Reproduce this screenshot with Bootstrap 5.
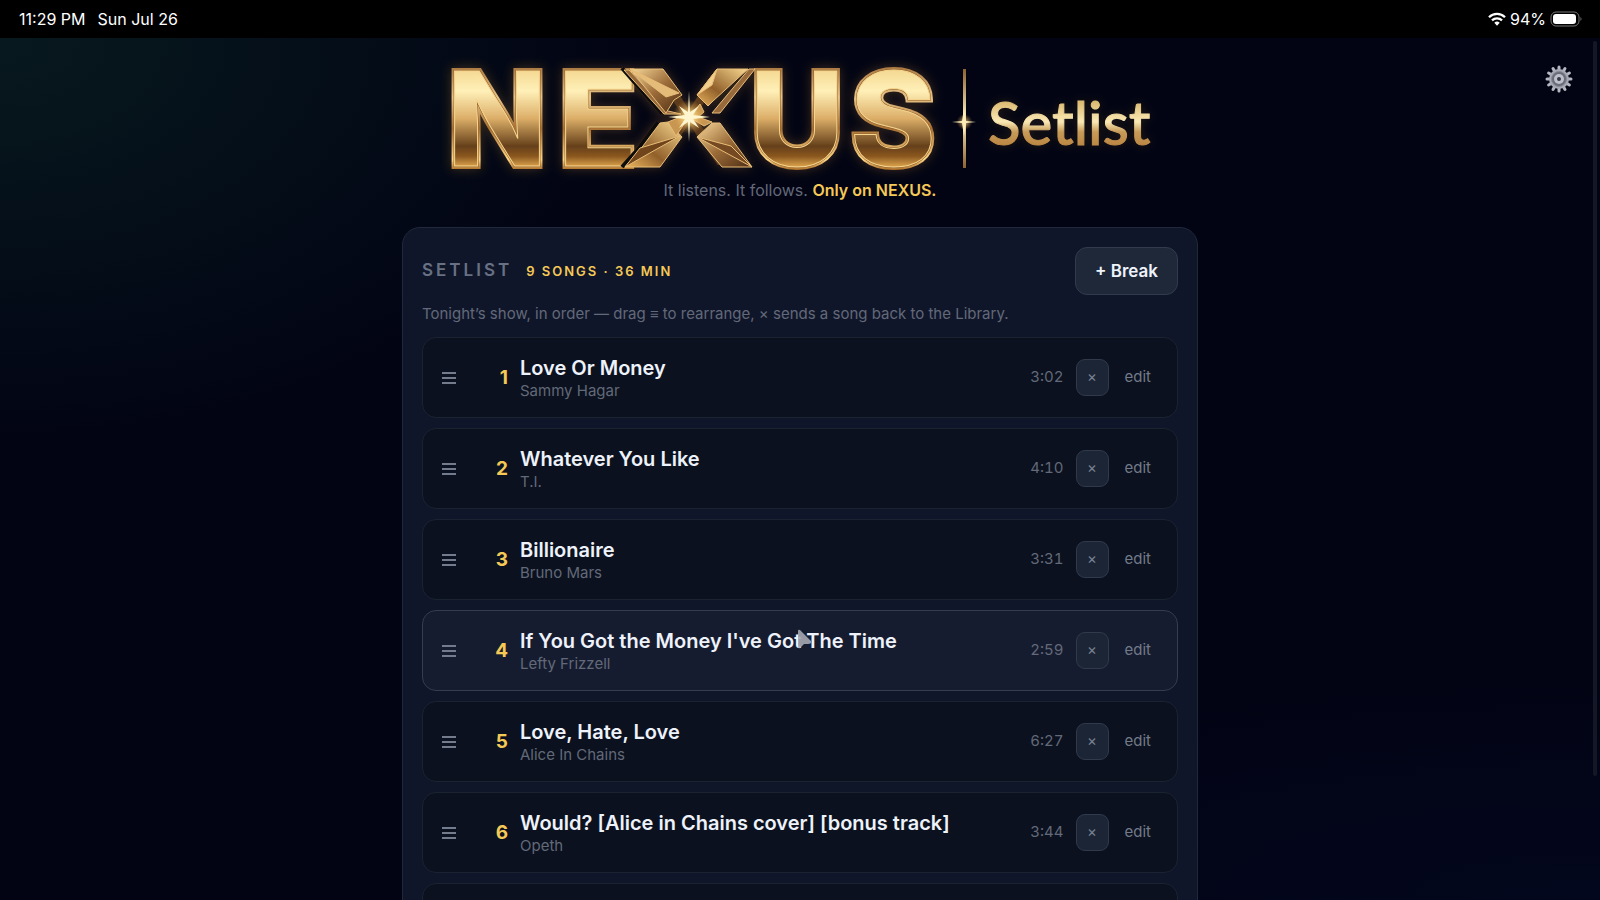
<!DOCTYPE html>
<html lang="en" data-bs-theme="dark">
<head>
<meta charset="utf-8">
<meta name="viewport" content="width=device-width, initial-scale=1">
<title>NEXUS Setlist</title>
<link href="https://cdn.jsdelivr.net/npm/bootstrap@5.3.0/dist/css/bootstrap.min.css" rel="stylesheet">
<script src="https://cdn.jsdelivr.net/npm/bootstrap@5.3.0/dist/js/bootstrap.bundle.min.js" defer></script>
<style>
  body { font-family: Inter, "Liberation Sans", sans-serif; background: #020414; color: #eef2fb; }
  .screen {
    background:
      radial-gradient(ellipse 620px 400px at 0 38px, #07191e, #07191e00),
      radial-gradient(ellipse 900px 220px at 100% 100%, #03071d, #03071d00),
      #020414;
  }
  .status-strip { height: 38px; background: #000; color: #fff; font-size: 16px; padding: 0 18px 0 19px; }
  .brand { padding-top: 12px; }
  .brand-logo { width: 740px; max-width: 100%; height: auto; overflow: visible; }
  .tagline { font-size: 16px; line-height: 24px; color: #626979; }
  .gold { color: #f5c956; }
  .panel { max-width: 796px; margin-top: 25px; padding: 19px; background: #10162a; border: 1px solid #20283a; border-radius: 18px; }
  .panel-title { font-size: 17px; letter-spacing: 3px; color: #687183; }
  .panel-count { font-size: 13px; letter-spacing: 2px; margin-left: 14px; }
  .break-btn { --bs-btn-bg: #1e2839; --bs-btn-border-color: #313b4d; --bs-btn-color: #eef2fb; --bs-btn-hover-bg: #273246;
    height: 48px; padding: 2px 19px 0; border-radius: 12px; font-size: 17px; }
  .hint { font-size: 15px; line-height: 20px; color: #626979; margin: 9px 0 13px; }
  .song-list { gap: 10px; }
  .song { height: 81px; background: #0b111e; border: 1px solid #1b2331; border-radius: 14px; padding: 0 26px 0 19px; }
  .song.active { background: #161c2f; border-color: #353c4e; }
  .grip { width: 14px; height: 14px; color: #737c8c; }
  .song-no { width: 52px; font-size: 19px; padding-top: 1px; }
  .song-text { min-width: 0; padding-left: 12px; }
  .song-title { font-size: 20px; line-height: 26px; }
  .song-artist { font-size: 15px; line-height: 20px; color: #626979; }
  .song-time { font-size: 15px; color: #626979; font-variant-numeric: tabular-nums; }
  .remove-btn { --bs-btn-bg: #1c2535; --bs-btn-border-color: #303a4b; --bs-btn-color: #788191;
    width: 33px; height: 37px; border-radius: 9px; font-size: 15px; margin: 0 16px 0 12px; }
  .edit-link { font-size: 15px; color: #727a89; }
  .gear { top: 64px; right: 26px; }
  .scroll-thumb { width: 4px; top: 41px; bottom: 124px; right: 3px; background: #141826; }
  .pointer { left: 797px; top: 629px; }
</style>
</head>
<body>
<div class="screen vh-100 d-flex flex-column overflow-hidden position-relative">
  <header class="status-strip d-flex align-items-center flex-shrink-0">
    <span>11:29 PM</span>
    <span class="ms-2 ps-1">Sun Jul 26</span>
    <span class="ms-auto d-flex align-items-center gap-1">
      <svg width="18" height="14" viewBox="0 0 18 14" fill="none" stroke="#fff" aria-hidden="true">
        <path d="M1 5.200a11.400 11.400 0 0 1 16 0" stroke-width="2.300"/><path d="M4 8.400a7.200 7.200 0 0 1 10 0" stroke-width="2.300"/>
        <path d="M6.300 10.800a4 4 0 0 1 5.400 0L9 13.700Z" fill="#fff" stroke="none"/>
      </svg>
      <span>94%</span>
      <svg width="32" height="16" viewBox="0 0 32 16" aria-hidden="true">
        <rect x="1" y="1" width="28" height="14" rx="5" fill="none" stroke="#777"/>
        <rect x="3" y="3" width="23" height="10" rx="3" fill="#fff"/><path d="M30.500 6v4q2-2 0-4Z" fill="#777"/>
      </svg>
    </span>
  </header>

  <main class="flex-grow-1 overflow-hidden d-flex flex-column align-items-center">
    <h1 class="brand m-0 d-flex flex-shrink-0">
      <svg class="brand-logo" width="740" height="128" viewBox="430 50 740 128" role="img" aria-label="NEXUS Setlist">
        <defs>
          <linearGradient id="face" gradientUnits="userSpaceOnUse" x1="0" y1="69" x2="0" y2="168">
            <stop offset="0" stop-color="#f3d790"/><stop offset=".22" stop-color="#fff0b8"/><stop offset=".5" stop-color="#dcae68"/>
            <stop offset=".78" stop-color="#65401a"/><stop offset=".88" stop-color="#8a571f"/><stop offset="1" stop-color="#e5ac52"/>
          </linearGradient>
          <linearGradient id="rim" gradientUnits="userSpaceOnUse" x1="0" y1="66" x2="0" y2="170">
            <stop offset="0" stop-color="#a8763e"/><stop offset=".3" stop-color="#e9c487"/><stop offset=".6" stop-color="#a87033"/>
            <stop offset=".9" stop-color="#ffd583"/><stop offset="1" stop-color="#a86b26"/>
          </linearGradient>
          <linearGradient id="word2" gradientUnits="userSpaceOnUse" x1="0" y1="102" x2="0" y2="146">
            <stop offset="0" stop-color="#dcbb73"/><stop offset=".45" stop-color="#fbe9b4"/><stop offset=".68" stop-color="#c79b58"/><stop offset="1" stop-color="#bb8642"/>
          </linearGradient>
          <linearGradient id="bar" x1="0" y1="0" x2="0" y2="1">
            <stop offset="0" stop-color="#8d6230"/><stop offset=".5" stop-color="#ffefbd"/><stop offset="1" stop-color="#8d6230"/>
          </linearGradient>
          <linearGradient id="facetA" x1="0" y1="0" x2="1" y2="1"><stop offset="0" stop-color="#f8d99a"/><stop offset=".5" stop-color="#9c6c39"/><stop offset="1" stop-color="#4c2d14"/></linearGradient>
          <linearGradient id="facetB" x1="1" y1="0" x2="0" y2="1"><stop offset="0" stop-color="#f9d990"/><stop offset=".6" stop-color="#91602b"/><stop offset="1" stop-color="#eeb75f"/></linearGradient>
          <radialGradient id="flare"><stop offset="0" stop-color="#fffbe2"/><stop offset=".3" stop-color="#ffdc8a" stop-opacity=".8"/><stop offset="1" stop-color="#d28b32" stop-opacity="0"/></radialGradient>
          <filter id="glow" x="-10%" y="-25%" width="120%" height="150%"><feDropShadow dx="0" dy="0" stdDeviation="6" flood-color="#b07a2e" flood-opacity=".35"/></filter>
          <filter id="halo" x="-10%" y="-25%" width="120%" height="150%"><feDropShadow dx="0" dy="0" stdDeviation="5" flood-color="#b07a2e" flood-opacity=".2"/></filter>
          <g id="letters" font-family="Inter, sans-serif" font-size="130" font-weight="800" text-anchor="middle">
            <text y="166" x="497">N</text><text y="166" x="598">E</text><text y="166" x="797">U</text><text y="166" x="893">S</text>
          </g>
          <g id="cross" font-family="Inter, sans-serif" font-size="130" font-weight="300" text-anchor="middle"><text y="165" x="689">X</text></g>
        </defs>
        <g filter="url(#glow)">
          <use href="#letters" fill="url(#rim)" stroke="url(#rim)" stroke-width="6"/>
          <use href="#letters" fill="#8a5c2a" stroke="#8a5c2a" stroke-width="2"/>
          <use href="#letters" fill="url(#face)" stroke="#f7d58d" stroke-width="1"/>
          <use href="#cross" fill="#5c3b1b"/>
          <path d="M622 68l40 46M658 122l-19 26-17 19" fill="none" stroke="#100c0c" stroke-width="4"/>
          <g stroke="#e8bd77" stroke-width="1" stroke-linejoin="round">
            <path d="M624 70h5l39 41 13 3-17 0Z" fill="#98693a"/>
            <path d="M630 69h33l19 26-8 5-8 13Z" fill="url(#facetA)"/>
            <path d="M630 69l49 24-13 4Z" fill="#e4bb78"/>
            <path d="M755 69h-6l-37 44h8Z" fill="#98693a"/>
            <path d="M717 69h31l-35 32-5 5-11-11Z" fill="url(#facetB)"/>
            <path d="M717 69l-5 16-15 10Z" fill="#f2cf8c"/>
            <path d="M660 123l8-1 14 15-22 30h-35l15-17Z" fill="url(#facetB)"/>
            <path d="M625 167l15-19 40-12Z" fill="#6f451d"/>
            <path d="M712 123h8l32 44h-30l-25-30Z" fill="url(#facetA)"/>
            <path d="M697 137l34 9 21 21Z" fill="#754a22"/>
            <path d="M668 122l8 14 13-19-11 1ZM700 104l-11 13 15 9 8-4-14-5 6-5Z" fill="#c79652"/>
          </g>
        </g>
        <circle cx="689" cy="117" r="17" fill="url(#flare)"/>
        <path d="M689 91l1 21 9-6-6 9 17 2-17 2 6 9-9-6-1 20-1-20-9 6 6-9-17-2 17-2-6-9 9 6Z" fill="#fff6cf"/>
        <rect x="963" y="69" width="3" height="99" fill="url(#bar)"/>
        <circle cx="964.500" cy="122" r="8" fill="url(#flare)" opacity=".7"/>
        <path d="M952 122l10-1 2-13 2 13 10 1-10 1-2 13-2-13Z" fill="#ffedb5"/>
        <text x="988" y="145" font-family="Lato, sans-serif" font-size="60" font-weight="500" fill="url(#word2)" stroke="url(#word2)" stroke-width="1" filter="url(#halo)">Setlist</text>
      </svg>
    </h1>
    <p class="tagline m-0 flex-shrink-0">It listens. It follows. <strong class="gold fw-semibold">Only on NEXUS.</strong></p>

    <section class="panel w-100 flex-shrink-0">
      <div class="d-flex align-items-center">
        <div class="d-flex align-items-baseline">
          <h2 class="panel-title fw-semibold m-0">SETLIST</h2>
          <span class="panel-count gold fw-semibold">9 SONGS · 36 MIN</span>
        </div>
        <button type="button" class="btn break-btn fw-semibold ms-auto">+ Break</button>
      </div>
      <p class="hint">Tonight’s show, in order — drag ≡ to rearrange, × sends a song back to the Library.</p>
      <div id="songs" class="song-list d-grid"></div>
    </section>
  </main>

  <button type="button" class="gear btn p-0 border-0 position-absolute lh-1" aria-label="Settings">
    <svg width="30" height="30" viewBox="-15 -15 30 30">
      <g stroke="#b4b7c1" stroke-width="3" stroke-linecap="round">
        <path d="M0-12V12M-12 0H12M-10.400-6L10.400 6M-10.400 6L10.400-6M-6-10.400L6 10.400M-6 10.400L6-10.400"/>
      </g>
      <circle r="10" fill="#a6a9b3"/><circle r="7.500" fill="#696d78" stroke="#888c97"/><circle r="5" fill="#bdc0ca"/><circle r="2" fill="#343946"/>
    </svg>
  </button>
  <div class="scroll-thumb position-absolute rounded-pill"></div>
  <svg class="pointer position-absolute" width="18" height="20" viewBox="0 0 18 20" aria-hidden="true"><path d="M1 2Q1 0 3 1L14 12Q15 15 11 15H7L3 19Q1 20 1 17Z" fill="#a5a8b2" opacity=".9"/></svg>
</div>
<script>
  const songs = [
    ["Love Or Money", "Sammy Hagar", "3:02"],
    ["Whatever You Like", "T.I.", "4:10"],
    ["Billionaire", "Bruno Mars", "3:31"],
    ["If You Got the Money I've Got The Time", "Lefty Frizzell", "2:59"],
    ["Love, Hate, Love", "Alice In Chains", "6:27"],
    ["Would? [Alice in Chains cover] [bonus track]", "Opeth", "3:44"]
  ];
  document.getElementById("songs").innerHTML = songs.map(([title, artist, time], i) => `
    <article class="song d-flex align-items-center${i === 3 ? " active" : ""}">
      <svg class="grip flex-shrink-0" viewBox="0 0 14 14" stroke="currentColor" stroke-width="2" aria-hidden="true"><path d="M0 2H14M0 7H14M0 12H14"/></svg>
      <span class="song-no gold fw-bold text-end flex-shrink-0">${i + 1}</span>
      <div class="song-text flex-grow-1">
        <div class="song-title fw-semibold text-truncate">${title}</div>
        <div class="song-artist">${artist}</div>
      </div>
      <span class="song-time">${time}</span>
      <button type="button" class="btn remove-btn p-0 flex-shrink-0" aria-label="Remove ${title}">×</button>
      <a href="#" class="edit-link text-decoration-none">edit</a>
    </article>`).join("") + '<article class="song"></article>';
</script>
</body>
</html>
